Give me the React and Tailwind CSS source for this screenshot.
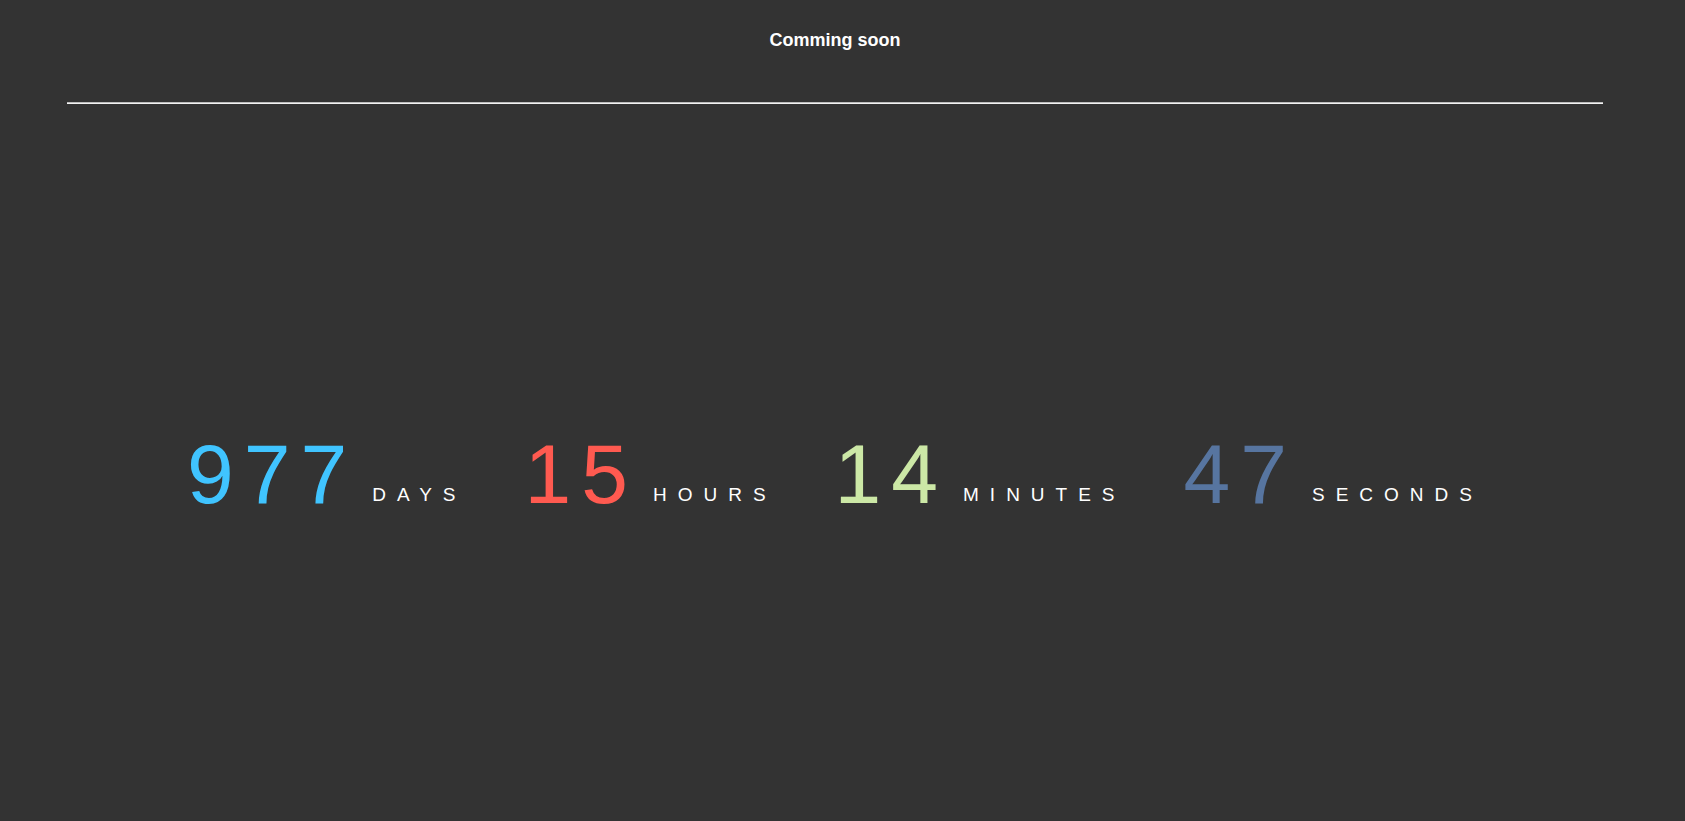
export default function App() {
  const items = [
    { n: "977", label: "DAYS", color: "text-[#40c4ff]" },
    { n: "15", label: "HOURS", color: "text-[#ff5a50]" },
    { n: "14", label: "MINUTES", color: "text-[#cce8a6]" },
    { n: "47", label: "SECONDS", color: "text-[#5775a0]" },
  ];
  return (
    <div className="min-h-[821px] bg-[#333333] text-white" style={{ fontFamily: '"Liberation Sans", Arial, sans-serif' }}>
      <div className="w-[1670px]">
        <div className="pt-[30px] text-center text-[18px] font-bold leading-[21px]">Comming soon</div>
        <div className="mx-[4%] mt-[51px] h-[2px] border-t border-t-[#bdbdbd] border-b border-b-[#f2f2f2]"></div>
        <div className="mt-[328px] flex items-baseline justify-center gap-[58px]">
          {items.map((it) => (
            <div key={it.label} className="flex items-baseline">
              <span className={`text-[84px] leading-none tracking-[10px] ${it.color}`}>{it.n}</span>
              <span className="relative -top-[2px] ml-[15px] text-[19px] leading-none tracking-[11px] text-white">{it.label}</span>
            </div>
          ))}
        </div>
      </div>
    </div>
  );
}
